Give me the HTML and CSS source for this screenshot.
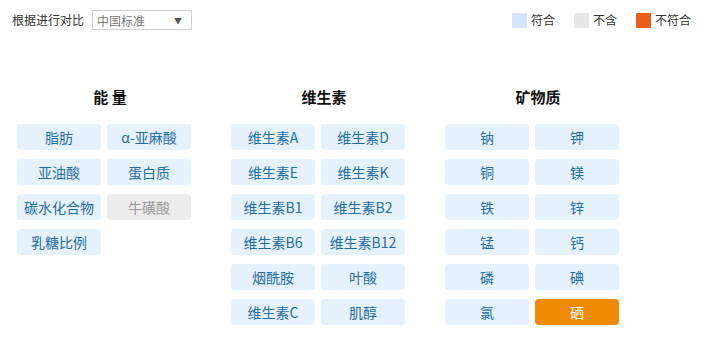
FILE: index.html
```html
<!DOCTYPE html>
<html lang="zh">
<head>
<meta charset="utf-8">
<link rel="stylesheet" href="styles.css">
</head>
<body>
<div class="page">
  <div class="topbar">
    <div class="compare">
      <span class="label">根据进行对比</span>
      <div class="select"><span>中国标准</span><span class="arrow">▼</span></div>
    </div>
    <div class="legend">
      <span class="item"><i class="sw sw-ok"></i>符合</span>
      <span class="item"><i class="sw sw-none"></i>不含</span>
      <span class="item"><i class="sw sw-bad"></i>不符合</span>
    </div>
  </div>
  <div class="groups">
    <div class="group">
      <div class="title">能 量</div>
      <div class="grid">
        <span class="tag">脂肪</span>
        <span class="tag">α-亚麻酸</span>
        <span class="tag">亚油酸</span>
        <span class="tag">蛋白质</span>
        <span class="tag">碳水化合物</span>
        <span class="tag off">牛磺酸</span>
        <span class="tag">乳糖比例</span>
      </div>
    </div>
    <div class="group">
      <div class="title">维生素</div>
      <div class="grid">
        <span class="tag">维生素A</span>
        <span class="tag">维生素D</span>
        <span class="tag">维生素E</span>
        <span class="tag">维生素K</span>
        <span class="tag">维生素B1</span>
        <span class="tag">维生素B2</span>
        <span class="tag">维生素B6</span>
        <span class="tag">维生素B12</span>
        <span class="tag">烟酰胺</span>
        <span class="tag">叶酸</span>
        <span class="tag">维生素C</span>
        <span class="tag">肌醇</span>
      </div>
    </div>
    <div class="group">
      <div class="title">矿物质</div>
      <div class="grid">
        <span class="tag">钠</span>
        <span class="tag">钾</span>
        <span class="tag">铜</span>
        <span class="tag">镁</span>
        <span class="tag">铁</span>
        <span class="tag">锌</span>
        <span class="tag">锰</span>
        <span class="tag">钙</span>
        <span class="tag">磷</span>
        <span class="tag">碘</span>
        <span class="tag">氯</span>
        <span class="tag bad">硒</span>
      </div>
    </div>
  </div>
</div>
</body>
</html>
```
FILE: styles.css
```css
* { box-sizing: border-box; }
html, body { margin: 0; padding: 0; background: #fff; }
body {
  font-family: "Noto Sans CJK SC", "Noto Sans", sans-serif;
  color: #333;
  width: 708px;
  height: 354px;
  overflow: hidden;
}
.page { padding: 10px 17px 0 12px; }
.topbar {
  display: flex;
  justify-content: space-between;
  align-items: center;
  height: 20px;
}
.compare { display: flex; align-items: center; }
.label { font-size: 12px; color: #333; line-height: 20px; }
.select {
  margin-left: 8px;
  width: 100px;
  height: 20px;
  border: 1px solid #d0d0d0;
  display: flex;
  align-items: center;
  justify-content: space-between;
  padding: 0 9px 0 4px;
  font-size: 12px;
  color: #777;
}
.arrow { font-size: 8px; color: #555; }
.legend { display: flex; align-items: center; gap: 19px; }
.item { display: flex; align-items: center; font-size: 12px; color: #333; line-height: 20px; }
.sw { display: inline-block; width: 15px; height: 15px; margin-right: 4px; border-radius: 1px; }
.sw-ok { background: #d0e5fb; }
.sw-none { background: #e7e7e7; }
.sw-bad { background: #ec5c1a; }
.groups {
  display: flex;
  padding-left: 5px;
  margin-top: 57px;
}
.group { width: 214px; }
.title {
  width: 186px;
  text-align: center;
  font-size: 15px;
  font-weight: bold;
  color: #111;
  line-height: 20px;
  height: 20px;
  margin-bottom: 17px;
}
.grid {
  display: grid;
  grid-template-columns: 84px 84px;
  column-gap: 6px;
  row-gap: 9px;
}
.tag {
  height: 26px;
  border-radius: 4px;
  background: #e5f1fd;
  color: #1f6ea6;
  font-size: 14px;
  line-height: 26px;
  text-align: center;
  white-space: nowrap;
}
.tag.off { background: #ececec; color: #999; }
.tag.bad { background: #f08a00; color: #fff; }
```
